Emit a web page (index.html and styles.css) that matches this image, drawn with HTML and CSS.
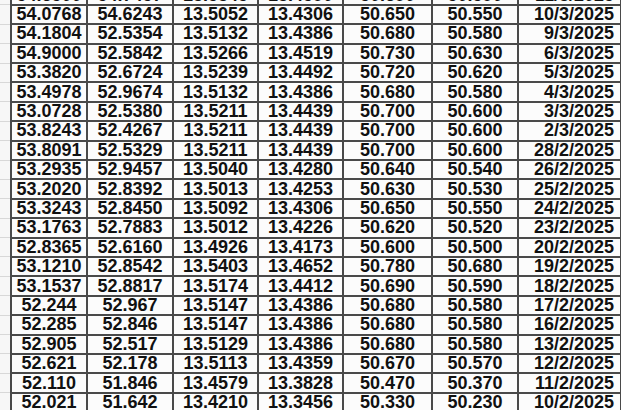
FILE: index.html
```html
<!DOCTYPE html>
<html>
<head>
<meta charset="utf-8">
<link rel="stylesheet" href="styles.css">
</head>
<body>
<div class="sheet">
<table class="rates">
<colgroup>
<col class="c0"><col class="c1"><col class="c2"><col class="c3"><col class="c4"><col class="c5"><col class="c6"><col class="c7">
</colgroup>
<tbody>
<tr><td class="gut"></td><td>54.6500</td><td>54.7457</td><td>13.5345</td><td>13.4590</td><td>50.690</td><td>50.590</td><td class="date">11/3/2025</td></tr>
<tr><td class="gut"></td><td>54.0768</td><td>54.6243</td><td>13.5052</td><td>13.4306</td><td>50.650</td><td>50.550</td><td class="date">10/3/2025</td></tr>
<tr><td class="gut"></td><td>54.1804</td><td>52.5354</td><td>13.5132</td><td>13.4386</td><td>50.680</td><td>50.580</td><td class="date">9/3/2025</td></tr>
<tr><td class="gut"></td><td>54.9000</td><td>52.5842</td><td>13.5266</td><td>13.4519</td><td>50.730</td><td>50.630</td><td class="date">6/3/2025</td></tr>
<tr><td class="gut"></td><td>53.3820</td><td>52.6724</td><td>13.5239</td><td>13.4492</td><td>50.720</td><td>50.620</td><td class="date">5/3/2025</td></tr>
<tr><td class="gut"></td><td>53.4978</td><td>52.9674</td><td>13.5132</td><td>13.4386</td><td>50.680</td><td>50.580</td><td class="date">4/3/2025</td></tr>
<tr><td class="gut"></td><td>53.0728</td><td>52.5380</td><td>13.5211</td><td>13.4439</td><td>50.700</td><td>50.600</td><td class="date">3/3/2025</td></tr>
<tr><td class="gut"></td><td>53.8243</td><td>52.4267</td><td>13.5211</td><td>13.4439</td><td>50.700</td><td>50.600</td><td class="date">2/3/2025</td></tr>
<tr><td class="gut"></td><td>53.8091</td><td>52.5329</td><td>13.5211</td><td>13.4439</td><td>50.700</td><td>50.600</td><td class="date">28/2/2025</td></tr>
<tr><td class="gut"></td><td>53.2935</td><td>52.9457</td><td>13.5040</td><td>13.4280</td><td>50.640</td><td>50.540</td><td class="date">26/2/2025</td></tr>
<tr><td class="gut"></td><td>53.2020</td><td>52.8392</td><td>13.5013</td><td>13.4253</td><td>50.630</td><td>50.530</td><td class="date">25/2/2025</td></tr>
<tr><td class="gut"></td><td>53.3243</td><td>52.8450</td><td>13.5092</td><td>13.4306</td><td>50.650</td><td>50.550</td><td class="date">24/2/2025</td></tr>
<tr><td class="gut"></td><td>53.1763</td><td>52.7883</td><td>13.5012</td><td>13.4226</td><td>50.620</td><td>50.520</td><td class="date">23/2/2025</td></tr>
<tr><td class="gut"></td><td>52.8365</td><td>52.6160</td><td>13.4926</td><td>13.4173</td><td>50.600</td><td>50.500</td><td class="date">20/2/2025</td></tr>
<tr><td class="gut"></td><td>53.1210</td><td>52.8542</td><td>13.5403</td><td>13.4652</td><td>50.780</td><td>50.680</td><td class="date">19/2/2025</td></tr>
<tr><td class="gut"></td><td>53.1537</td><td>52.8817</td><td>13.5174</td><td>13.4412</td><td>50.690</td><td>50.590</td><td class="date">18/2/2025</td></tr>
<tr><td class="gut"></td><td>52.244</td><td>52.967</td><td>13.5147</td><td>13.4386</td><td>50.680</td><td>50.580</td><td class="date">17/2/2025</td></tr>
<tr><td class="gut"></td><td>52.285</td><td>52.846</td><td>13.5147</td><td>13.4386</td><td>50.680</td><td>50.580</td><td class="date">16/2/2025</td></tr>
<tr><td class="gut"></td><td>52.905</td><td>52.517</td><td>13.5129</td><td>13.4386</td><td>50.680</td><td>50.580</td><td class="date">13/2/2025</td></tr>
<tr><td class="gut"></td><td>52.621</td><td>52.178</td><td>13.5113</td><td>13.4359</td><td>50.670</td><td>50.570</td><td class="date">12/2/2025</td></tr>
<tr><td class="gut"></td><td>52.110</td><td>51.846</td><td>13.4579</td><td>13.3828</td><td>50.470</td><td>50.370</td><td class="date">11/2/2025</td></tr>
<tr><td class="gut"></td><td>52.021</td><td>51.642</td><td>13.4210</td><td>13.3456</td><td>50.330</td><td>50.230</td><td class="date">10/2/2025</td></tr>
</tbody>
</table>
</div>
</body>
</html>
```
FILE: styles.css
```css
html, body {
  margin: 0;
  padding: 0;
  background: #fdfdfd;
}
.sheet {
  width: 621px;
  height: 410px;
  overflow: hidden;
}
.rates {
  border-collapse: collapse;
  table-layout: fixed;
  width: 621px;
  margin-top: -15.5px;
  font-family: "Liberation Sans", Arial, sans-serif;
  font-weight: bold;
  font-size: 18px;
  color: #111;
}
.c0 { width: 11px; }
.c1 { width: 76px; }
.c2 { width: 86px; }
.c3 { width: 85px; }
.c4 { width: 85px; }
.c5 { width: 89px; }
.c6 { width: 86px; }
.c7 { width: 103px; }
.rates td {
  height: 17.4px;
  padding: 0;
  line-height: 17px;
  text-align: center;
  border: 2px solid #4a4a4a;
  background: #fcfcfc;
  white-space: nowrap;
}
.rates td.date {
  text-align: right;
  padding-right: 6px;
}
.rates td.gut {
  border-left: none;
  border-top: 1px solid #d8d8d8;
  border-bottom: 1px solid #d8d8d8;
  background: #f7f7f7;
}
```
